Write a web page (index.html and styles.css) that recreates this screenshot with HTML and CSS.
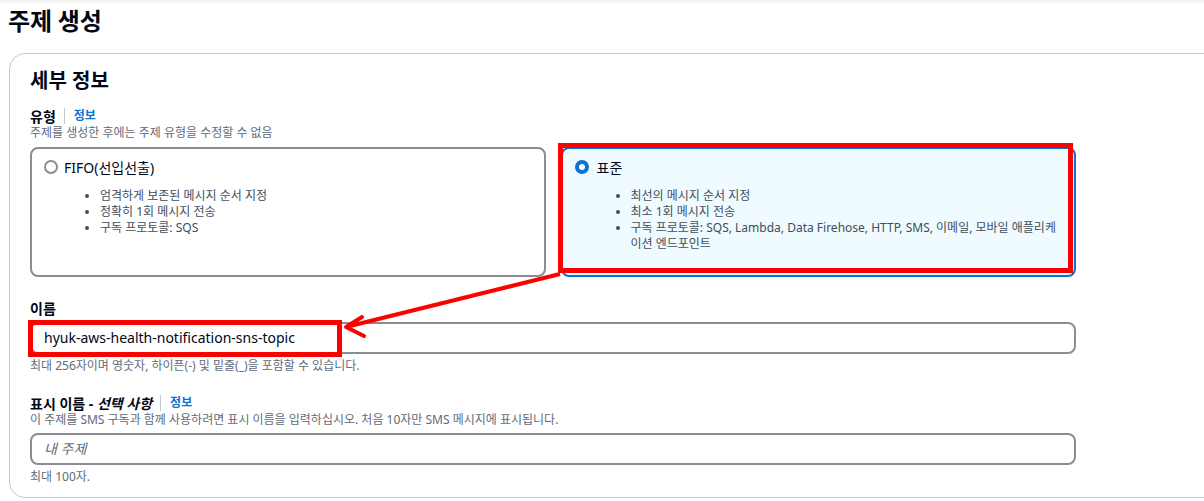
FILE: index.html
```html
<!DOCTYPE html>
<html lang="ko">
<head>
    <meta charset="UTF-8">
    <meta name="viewport" content="width=device-width, initial-scale=1.0">
    <title>주제 생성</title>
    <link rel="stylesheet" href="styles.css">
</head>
<body>
    <div class="top-shade"></div>

    <main class="page">
        <h1 class="page-title">주제 생성</h1>

        <section class="card">
            <h2 class="card-title">세부 정보</h2>

            <div class="field field-type">
                <div class="label-row">
                    <span class="label">유형</span>
                    <span class="info">정보</span>
                </div>
                <div class="desc">주제를 생성한 후에는 주제 유형을 수정할 수 없음</div>

                <div class="tiles">
                    <div class="tile">
                        <div class="tile-head">
                            <span class="radio"></span>
                            <span class="tile-label">FIFO(선입선출)</span>
                        </div>
                        <ul class="tile-list">
                            <li>엄격하게 보존된 메시지 순서 지정</li>
                            <li>정확히 1회 메시지 전송</li>
                            <li>구독 프로토콜: SQS</li>
                        </ul>
                    </div>
                    <div class="tile selected">
                        <div class="tile-head">
                            <span class="radio checked"></span>
                            <span class="tile-label">표준</span>
                        </div>
                        <ul class="tile-list">
                            <li>최선의 메시지 순서 지정</li>
                            <li>최소 1회 메시지 전송</li>
                            <li>구독 프로토콜: SQS, Lambda, Data Firehose, HTTP, SMS, 이메일, 모바일 애플리케이션 엔드포인트</li>
                        </ul>
                    </div>
                </div>
            </div>

            <div class="field field-name">
                <div class="label-row">
                    <span class="label">이름</span>
                </div>
                <div class="input">hyuk-aws-health-notification-sns-topic</div>
                <div class="hint">최대 256자이며 영숫자, 하이픈(-) 및 밑줄(_)을 포함할 수 있습니다.</div>
            </div>

            <div class="field field-display">
                <div class="label-row">
                    <span class="label">표시 이름 - <em>선택 사항</em></span>
                    <span class="info">정보</span>
                </div>
                <div class="desc">이 주제를 SMS 구독과 함께 사용하려면 표시 이름을 입력하십시오. 처음 10자만 SMS 메시지에 표시됩니다.</div>
                <div class="input placeholder">내 주제</div>
                <div class="hint">최대 100자.</div>
            </div>
        </section>
    </main>

    <!-- red markup drawn over the screenshot -->
    <svg class="annotations" width="1204" height="501" viewBox="0 0 1204 501">
        <rect x="560.5" y="145.5" width="510" height="125" fill="none" stroke="#ff0000" stroke-width="5"/>
        <rect x="30.5" y="322.5" width="309" height="32" fill="none" stroke="#ff0000" stroke-width="5"/>
        <line x1="560" y1="274" x2="350" y2="326" stroke="#ff0000" stroke-width="4"/>
        <polyline points="362,317 346,327 364,336" fill="none" stroke="#ff0000" stroke-width="4" stroke-linecap="round" stroke-linejoin="round"/>
    </svg>
</body>
</html>
```

FILE: styles.css
```css
body {
    margin: 0;
    background: #fff;
    color: #000716;
    font-family: "Noto Sans", "Noto Sans CJK KR", sans-serif;
    overflow: hidden;
    position: relative;
    height: 501px;
}

.top-shade {
    height: 4px;
    background: linear-gradient(#ececec, #fff);
}

.page {
    padding-left: 8px;
}

.page-title {
    margin: 0;
    padding-top: 2px;
    font-size: 24px;
    line-height: 30px;
    font-weight: 700;
    letter-spacing: -0.2px;
}

.card {
    margin: 17px 0 0 1px;
    width: 1300px;
    border: 1px solid #c6c6cd;
    border-radius: 16px;
    padding: 13px 20px 12px;
    box-sizing: border-box;
}

.card-title {
    margin: 0;
    font-size: 20px;
    line-height: 28px;
    font-weight: 700;
}

.field {
    width: 1046px;
}

.field-type {
    margin-top: 12px;
}

.field-name {
    margin-top: 22px;
}

.field-display {
    margin-top: 20px;
}

.label-row {
    display: flex;
    align-items: center;
    height: 18px;
}

.label {
    font-size: 14px;
    font-weight: 700;
}

.label em {
    font-style: italic;
}

.info {
    font-size: 12px;
    font-weight: 700;
    color: #0972d3;
    margin-left: 8px;
    padding-left: 9px;
    border-left: 1px solid #c6c6cd;
    line-height: 16px;
}

.desc,
.hint {
    font-size: 12px;
    line-height: 16px;
    color: #5f6b7a;
}

.tiles {
    display: grid;
    grid-template-columns: 1fr 1fr;
    gap: 15px;
    margin-top: 6px;
}

.tile {
    height: 130px;
    border: 2px solid #8c8c94;
    border-radius: 8px;
    padding: 8px 14px 0 12px;
    box-sizing: border-box;
}

.tile.selected {
    background: #f0fbff;
    border-color: #0972d3;
}

.tile-head {
    display: flex;
    align-items: center;
    height: 20px;
}

.radio {
    width: 14px;
    height: 14px;
    border: 2px solid #8c8c94;
    border-radius: 50%;
    box-sizing: border-box;
    margin-right: 6px;
}

.radio.checked {
    border: 4px solid #0972d3;
    background: #fff;
    margin-right: 8px;
}

.tile-label {
    font-size: 14px;
}

.tile-list {
    margin: 11px 0 0;
    padding-left: 56px;
    font-size: 12px;
    line-height: 16px;
    color: #414d5c;
}

.input {
    margin-top: 5px;
    height: 32px;
    border: 2px solid #8c8c94;
    border-radius: 8px;
    box-sizing: border-box;
    padding: 0 12px;
    font-size: 14px;
    line-height: 28px;
    color: #000716;
}

.input.placeholder {
    color: #5f6b7a;
    font-style: italic;
}

.field-name .hint,
.field-display .hint {
    margin-top: 4px;
}

.annotations {
    position: absolute;
    top: 0;
    left: 0;
    pointer-events: none;
}
```
